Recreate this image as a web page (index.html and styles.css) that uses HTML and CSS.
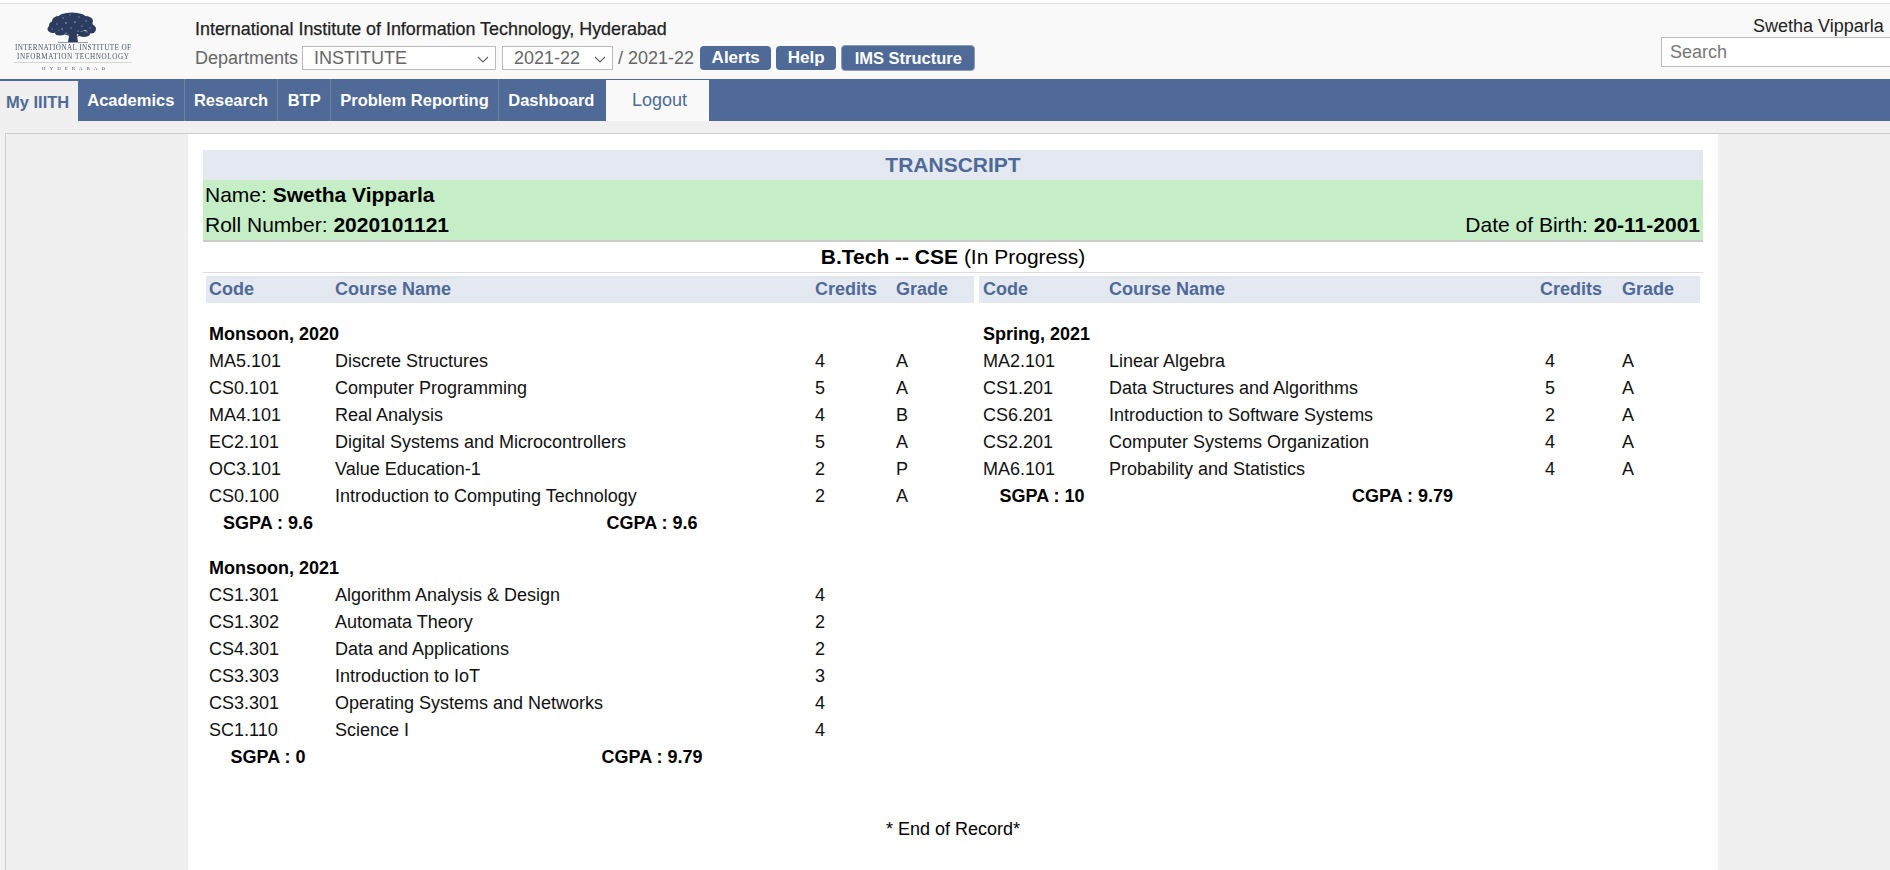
FILE: index.html
```html
<!DOCTYPE html>
<html lang="en">
<head>
<meta charset="utf-8">
<title>Transcript</title>
<link rel="stylesheet" href="styles.css">
</head>
<body>
<div class="page">
  <header class="top">
    <svg class="logo" width="190" height="74" viewBox="0 0 190 74" role="img" aria-label="IIIT Hyderabad">
      <g class="tree">
        <g fill="#2b3c5e">
          <ellipse cx="72" cy="18" rx="14" ry="5.5"/>
          <ellipse cx="71" cy="25" rx="22" ry="7"/>
          <ellipse cx="59" cy="21" rx="7" ry="5"/>
          <ellipse cx="85" cy="21" rx="8" ry="5"/>
          <ellipse cx="53" cy="29" rx="5.5" ry="4"/>
          <ellipse cx="91" cy="29" rx="5" ry="4.5"/>
          <ellipse cx="60" cy="33" rx="5" ry="2.5"/>
          <ellipse cx="84" cy="34" rx="6" ry="3"/>
          <ellipse cx="72" cy="32" rx="9" ry="3"/>
          <path d="M68 42 L70 30 H76 L78 42 Z"/>
          <path d="M62 33 L71 36 M84 34 L75 37" stroke="#2b3c5e" stroke-width="1" fill="none"/>
        </g>
        <g fill="#7c8ba6">
          <circle cx="63" cy="18" r=".8"/><circle cx="70" cy="15" r=".7"/><circle cx="79" cy="17" r=".8"/>
          <circle cx="86" cy="21" r=".8"/><circle cx="57" cy="24" r=".8"/><circle cx="66" cy="23" r=".9"/>
          <circle cx="75" cy="22" r=".9"/><circle cx="82" cy="26" r=".8"/><circle cx="90" cy="28" r=".7"/>
          <circle cx="52" cy="29" r=".7"/><circle cx="62" cy="29" r=".9"/><circle cx="71" cy="28" r=".8"/>
          <circle cx="78" cy="31" r=".8"/><circle cx="66" cy="33" r=".8"/><circle cx="87" cy="32" r=".7"/>
        </g>
        <rect x="58" y="42" width="30" height="1" fill="#8f9bb0"/>
      </g>
      <g class="logo-text" fill="#4a5670">
        <text x="15" y="49.5" font-size="7.2" textLength="116" lengthAdjust="spacing">INTERNATIONAL INSTITUTE OF</text>
        <text x="17" y="58.5" font-size="7.2" textLength="112" lengthAdjust="spacing">INFORMATION TECHNOLOGY</text>
        <text x="42" y="70" font-size="5" textLength="63">HYDERABAD</text>
      </g>
      <rect x="14" y="62" width="118" height="1" fill="#d5d8d0"/>
    </svg>
    <div class="top-mid">
      <div class="inst">International Institute of Information Technology, Hyderabad</div>
      <div class="controls">
        <span>Departments</span>
        <span class="sel-wrap sel-dept">
          <select class="sel"><option>INSTITUTE</option></select>
          <svg class="chev" width="12" height="7" viewBox="0 0 12 7"><path d="M1 1 L6 6 L11 1" fill="none" stroke="#666" stroke-width="1.2"/></svg>
        </span>
        <span class="sel-wrap sel-year">
          <select class="sel"><option>2021-22</option></select>
          <svg class="chev" width="12" height="7" viewBox="0 0 12 7"><path d="M1 1 L6 6 L11 1" fill="none" stroke="#666" stroke-width="1.2"/></svg>
        </span>
        <span>/ 2021-22</span>
        <a class="btn btn-first">Alerts</a>
        <a class="btn">Help</a>
        <a class="btn btn-big">IMS Structure</a>
      </div>
    </div>
    <div class="top-right">
      <div class="user">Swetha Vipparla</div>
      <input class="search" placeholder="Search">
    </div>
  </header>

  <nav class="nav">
    <a class="tab tab-active">My IIITH</a>
    <a class="tab">Academics</a>
    <a class="tab">Research</a>
    <a class="tab">BTP</a>
    <a class="tab">Problem Reporting</a>
    <a class="tab tab-last">Dashboard</a>
    <a class="tab-logout">Logout</a>
  </nav>

  <main class="main">
    <div class="panel">
      <div class="sheet">
        <h1 class="title">TRANSCRIPT</h1>
        <section class="student">
          <div>Name: <b>Swetha Vipparla</b></div>
          <div class="student-row">
            <span>Roll Number: <b>2020101121</b></span>
            <span>Date of Birth: <b>20-11-2001</b></span>
          </div>
        </section>
        <div class="degree"><b>B.Tech -- CSE</b> (In Progress)</div>
        <div class="cols">
          <div class="col col-l">
            <div class="row head"><span>Code</span><span>Course Name</span><span>Credits</span><span>Grade</span></div>
            <div class="sem">Monsoon, 2020</div>
            <div class="row"><span>MA5.101</span><span>Discrete Structures</span><span>4</span><span>A</span></div>
            <div class="row"><span>CS0.101</span><span>Computer Programming</span><span>5</span><span>A</span></div>
            <div class="row"><span>MA4.101</span><span>Real Analysis</span><span>4</span><span>B</span></div>
            <div class="row"><span>EC2.101</span><span>Digital Systems and Microcontrollers</span><span>5</span><span>A</span></div>
            <div class="row"><span>OC3.101</span><span>Value Education-1</span><span>2</span><span>P</span></div>
            <div class="row"><span>CS0.100</span><span>Introduction to Computing Technology</span><span>2</span><span>A</span></div>
            <div class="gpa"><span>SGPA : 9.6</span><span>CGPA : 9.6</span></div>
            <div class="sem sem-next">Monsoon, 2021</div>
            <div class="row"><span>CS1.301</span><span>Algorithm Analysis &amp; Design</span><span>4</span><span></span></div>
            <div class="row"><span>CS1.302</span><span>Automata Theory</span><span>2</span><span></span></div>
            <div class="row"><span>CS4.301</span><span>Data and Applications</span><span>2</span><span></span></div>
            <div class="row"><span>CS3.303</span><span>Introduction to IoT</span><span>3</span><span></span></div>
            <div class="row"><span>CS3.301</span><span>Operating Systems and Networks</span><span>4</span><span></span></div>
            <div class="row"><span>SC1.110</span><span>Science I</span><span>4</span><span></span></div>
            <div class="gpa"><span>SGPA : 0</span><span>CGPA : 9.79</span></div>
          </div>
          <div class="col col-r">
            <div class="row head"><span>Code</span><span>Course Name</span><span>Credits</span><span>Grade</span></div>
            <div class="sem">Spring, 2021</div>
            <div class="row"><span>MA2.101</span><span>Linear Algebra</span><span class="cr">4</span><span>A</span></div>
            <div class="row"><span>CS1.201</span><span>Data Structures and Algorithms</span><span class="cr">5</span><span>A</span></div>
            <div class="row"><span>CS6.201</span><span>Introduction to Software Systems</span><span class="cr">2</span><span>A</span></div>
            <div class="row"><span>CS2.201</span><span>Computer Systems Organization</span><span class="cr">4</span><span>A</span></div>
            <div class="row"><span>MA6.101</span><span>Probability and Statistics</span><span class="cr">4</span><span>A</span></div>
            <div class="gpa"><span>SGPA : 10</span><span>CGPA : 9.79</span></div>
          </div>
        </div>
        <div class="end">* End of Record*</div>
      </div>
    </div>
  </main>
</div>
</body>
</html>
```
FILE: styles.css
```css
* { box-sizing: border-box; }
html, body { margin: 0; height: 100%; overflow: hidden; background: #fff; }
body { font-family: "Liberation Sans", Arial, sans-serif; color: #000; }
.page { width: 1890px; height: 870px; overflow: hidden; display: flex; flex-direction: column; padding-top: 3px; }

.top { height: 76px; flex: none; background: #f9f9f9; border-top: 1px solid #ddd; display: flex; position: relative; }
.logo { flex: none; margin-top: -4px; }
.tree { filter: blur(.5px); }
.logo-text { font-family: "Liberation Serif", serif; filter: blur(.25px); }
.top-mid { margin-left: 5px; flex: 1; }
.inst { font-size: 17.9px; line-height: 20px; margin-top: 15px; color: #222; -webkit-text-stroke: .25px #222; }
.controls { display: flex; align-items: center; margin-top: 6px; height: 26px; font-size: 18px; color: #666; }
.sel-wrap { position: relative; display: block; height: 24px; }
.sel-dept { width: 194px; margin: 0 6px 0 4px; }
.sel-year { width: 111px; margin-right: 5px; }
.sel { appearance: none; -webkit-appearance: none; display: block; width: 100%; height: 24px; background: #fff; border: 1px solid #bbb; color: #666; font: 18px "Liberation Sans", Arial, sans-serif; padding: 0 0 0 11px; border-radius: 0; }
.chev { position: absolute; right: 7px; top: 10px; }
.btn { height: 24px; line-height: 24px; background: #4f6a96; color: #fff; font-weight: bold; font-size: 17px; border-radius: 4px; padding: 0 11.5px; margin-left: 5px; }
.btn-first { margin-left: 6px; }
.btn-big { height: 26px; border: 1px solid #8b9dbb; line-height: 25px; margin-left: 5px; padding: 0 12.5px; font-size: 16.5px; }
.top-right { position: absolute; left: 1661px; top: 0; width: 229px; }
.user { position: absolute; left: 92px; top: 12px; font-size: 18px; line-height: 20px; white-space: nowrap; color: #222; }
.search { position: absolute; left: 0; top: 33px; width: 229px; height: 30px; border: 1px solid #bbb; border-right: 0; background: #fff; font: 18px "Liberation Sans", Arial, sans-serif; padding: 0 8px; border-radius: 0; }
.search::placeholder { color: #777; opacity: 1; }

.nav { height: 42px; flex: none; background: #4f6a96; display: flex; font-size: 16.5px; font-weight: bold; color: #fff; }
.tab { padding: 0 9.25px; line-height: 42px; border-right: 1px solid #6a82a8; white-space: nowrap; }
.tab-active { background: #f0f0f0; color: #4f6a96; width: 78px; padding: 2px 0 0 6px; margin-top: 2px; line-height: 38px; border-right: 0; }
.tab-last { border-right: 0; padding-right: 12px; }
.tab-logout { background: #f9f9f9; color: #4f6a96; font-weight: normal; width: 103px; margin-top: 1px; padding-left: 3px; text-align: center; line-height: 40px; font-size: 18px; }

.main { flex: 1; background: #f0f0f0; padding: 12px 0 0 5px; min-height: 0; display: flex; }
.panel { flex: 1; border-top: 1px solid #ccc; border-left: 1px solid #ccc; }
.sheet { margin-left: 182px; width: 1530px; height: 100%; background: #fff; padding: 16px 15px 0; }
.title { margin: 0; height: 30px; line-height: 30px; background: #e4e8f1; color: #4f6a96; font-size: 21px; font-weight: bold; text-align: center; }
.student { background: #c6eec6; height: 62px; border-bottom: 2px solid #ccc; font-size: 21px; padding: 0 3px 0 2px; line-height: 30px; }
.student-row { display: flex; justify-content: space-between; }
.degree { height: 31px; line-height: 29px; text-align: center; font-size: 21px; border-bottom: 1px solid #ddd; }
.cols { display: flex; padding-left: 3px; gap: 5px; margin-top: 3px; }
.col-l { width: 768px; }
.col-r { width: 721px; }
.row { display: grid; height: 27px; line-height: 27px; font-size: 18px; white-space: nowrap; color: #111; }
.col-l .row { grid-template-columns: 126px 480px 81px 80px; padding-left: 3px; }
.col-r .row { grid-template-columns: 126px 431px 82px 78px; padding-left: 4px; }
.head { background: #e4e8f1; font-weight: bold; }
.col-l .head, .col-r .head { color: #4f6a96; }
.cr { padding-left: 5px; }
.sem { font-weight: bold; font-size: 18px; height: 27px; line-height: 27px; margin-top: 18px; padding-left: 3px; }
.col-r .sem { padding-left: 4px; }
.col-l .sem-next { margin-top: 18px; }
.gpa { height: 27px; line-height: 27px; display: grid; font-size: 18px; font-weight: bold; text-align: center; }
.col-l .gpa { grid-template-columns: 124px 644px; }
.col-r .gpa { grid-template-columns: 126px 595px; }
.end { margin-top: 45px; font-size: 18px; line-height: 27px; text-align: center; }
```
